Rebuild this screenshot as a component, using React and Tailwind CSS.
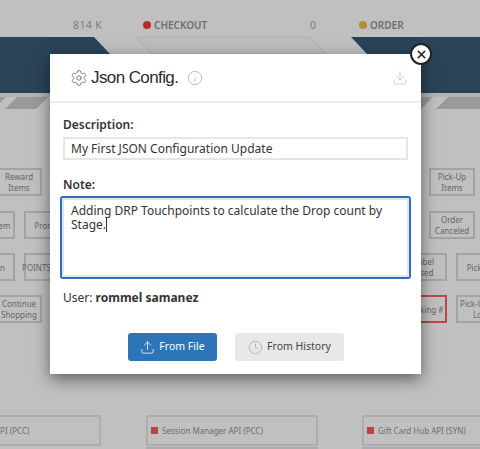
import React from "react";
import { Download, Info, Settings, Upload, Clock, X } from "lucide-react";

// Nodos del diagrama de fondo (left/top son su lugar en el lienzo)
const nodes = [
  { label: "Reward Items", x: -4, y: 168 },
  { label: "View Item", x: -31, y: 211 },
  { label: "Promo", x: 24, y: 211 },
  { label: "Button", x: -31, y: 253 },
  { label: "POINTS Used", x: 24, y: 253, nowrap: true },
  { label: "Continue Shopping", x: -4, y: 295 },
  { label: "Pick-Up Items", x: 429, y: 168 },
  { label: "Order Canceled", x: 429, y: 211 },
  { label: "Label\nUsed", x: 401, y: 253 },
  { label: "Picked", x: 456, y: 253 },
  { label: "Tracking #", x: 401, y: 295, red: true },
  { label: "Pick-Up at Lot", x: 456, y: 295 },
];

const apis = [
  { label: "API (PCC)", x: -60, w: 161, square: false },
  { label: "Session Manager API (PCC)", x: 146, w: 172, square: true },
  { label: "Gift Card Hub API (SYN)", x: 362, w: 160, square: true },
];

const Backdrop = () => (
  <>
    <svg className="absolute left-0 top-0" width="480" height="120" viewBox="0 0 480 120" aria-hidden="true">
      <path d="M0 93V37H94L110 54V93Z" fill="#2a4358" />
      <path d="M351 37H480V93H367V54Z" fill="#2a4358" />
      <path d="M135 37H310L326 54H152Z" fill="#bdbdbd" stroke="#aeaeae" strokeWidth="1" />
      <rect x="0" y="93" width="480" height="4" fill="#b4b4b4" />
      <path d="M-6 109L6 97H-30ZM5 109L17 97H48L36 109ZM48 109L60 97H70V109Z" fill="#9a9a9a" />
      <path d="M421 109L433 97H404V109ZM436 109L448 97H480V109Z" fill="#9a9a9a" />
    </svg>

    <span className="absolute left-[73px] top-[17px] text-[10.5px] leading-4 tracking-[0.4px] text-[#7d7d7d]">814 K</span>
    <span className="absolute left-[143px] top-[21px] size-2 rounded-full bg-[#b92c25]" />
    <span className="absolute left-[154px] top-[17px] text-[10px] font-semibold leading-4 text-[#6f6f6f]">CHECKOUT</span>
    <span className="absolute left-[310px] top-[17px] text-[10.5px] leading-4 text-[#7d7d7d]">0</span>
    <span className="absolute left-[359px] top-[21px] size-2 rounded-full bg-[#b58d30]" />
    <span className="absolute left-[370px] top-[17px] text-[10px] font-semibold leading-4 text-[#6f6f6f]">ORDER</span>

    {nodes.map((n) => (
      <div
        key={n.label}
        className={`absolute flex h-[28px] w-[46px] items-center justify-center border-2 text-center text-[8px] leading-[11px] text-[#666] ${
          n.red ? "border-[#b84a48]" : "border-[#a3a3a3]"
        } ${n.nowrap ? "whitespace-nowrap" : "whitespace-pre-line"}`}
        style={{ left: n.x, top: n.y }}
      >
        {n.label}
      </div>
    ))}

    {apis.map((a) => (
      <div
        key={a.label}
        className="absolute top-[415px] flex h-[31px] items-center gap-[4px] border-2 border-[#adadad] pl-[3px] text-[8px] text-[#6d6d6d]"
        style={{ left: a.x, width: a.w }}
      >
        {a.square ? <span className="size-[7px] shrink-0 bg-[#b84444]" /> : <span className="w-[46px] shrink-0" />}
        {a.label}
      </div>
    ))}
    <div className="absolute left-[146px] top-[447px] h-4 w-[172px] border-2 border-[#adadad]" />
    <div className="absolute left-[362px] top-[447px] h-4 w-[160px] border-2 border-[#adadad]" />
  </>
);

const App = () => {
  return (
    <div className="relative h-[449px] w-[480px] overflow-hidden bg-[#c0c0c0] font-['Noto_Sans',sans-serif]">
      <Backdrop />

      {/* Modal */}
      <div className="absolute left-[50px] top-[54px] h-[320px] w-[371px] bg-white shadow-[0_5px_15px_rgba(0,0,0,0.5)]">
        <div className="flex h-[49px] items-center border-b-2 border-[#ededed] pl-[20px] pr-[13px]">
          <Settings size={18} strokeWidth={1} className="text-[#555]" />
          <span className="ml-[3px] font-['Liberation_Sans',sans-serif] text-[17px] tracking-[-0.6px] text-[#2c2c2c]">Json Config.</span>
          <Info size={16} strokeWidth={1.25} className="ml-[9px] mt-[1px] text-[#b0b0b0]" />
          <Download size={16} strokeWidth={1.25} className="ml-auto text-[#c4c4c4]" />
        </div>

        <div className="flex flex-col px-[13px]">
          <label className="mt-[12px] text-[12px] font-semibold leading-[19px] text-[#333]">Description:</label>
          <div className="mt-[3px] flex h-[23px] items-center border-2 border-[#e6e6e6] pl-[6px] text-[12px] text-[#333]">
            My First JSON Configuration Update
          </div>

          <label className="mt-[15px] text-[12px] font-semibold leading-[19px] text-[#333]">Note:</label>
          <div className="-mx-[3px] mt-[2px] h-[83px] rounded-[3px] border-2 border-[#2f6cc4]">
            <div className="h-full border-2 border-[#e6e6e6] px-[7px] py-[4px] text-[12px] leading-[14px] text-[#333]">
              Adding DRP Touchpoints to calculate the Drop count by Stage.
              <span className="inline-block h-[14px] w-px bg-[#333] align-top" />
            </div>
          </div>

          <div className="mt-[10px] text-[12px] leading-[18px] text-[#333]">
            User: <span className="font-bold">rommel samanez</span>
          </div>

          <div className="mt-[26px] flex gap-[18px] pl-[65px]">
            <button type="button" className="flex h-[28px] w-[89px] items-center justify-center gap-[4px] rounded-[3px] bg-[#2e75b8] text-[10.5px] text-white">
              <Upload size={15} strokeWidth={1.25} />
              From File
            </button>
            <button type="button" className="flex h-[28px] w-[109px] items-center justify-center gap-[4px] rounded-[3px] bg-[#e8e8e8] text-[10.5px] text-[#444]">
              <Clock size={15} strokeWidth={1.25} className="text-[#aaa]" />
              From History
            </button>
          </div>
        </div>
      </div>

      {/* Cerrar */}
      <button type="button" className="absolute left-[410px] top-[43px] flex size-[22px] items-center justify-center rounded-full border-2 border-[#222] bg-white" aria-label="Close">
        <X size={13} strokeWidth={3} className="text-[#222]" />
      </button>
    </div>
  );
};

export default App;
